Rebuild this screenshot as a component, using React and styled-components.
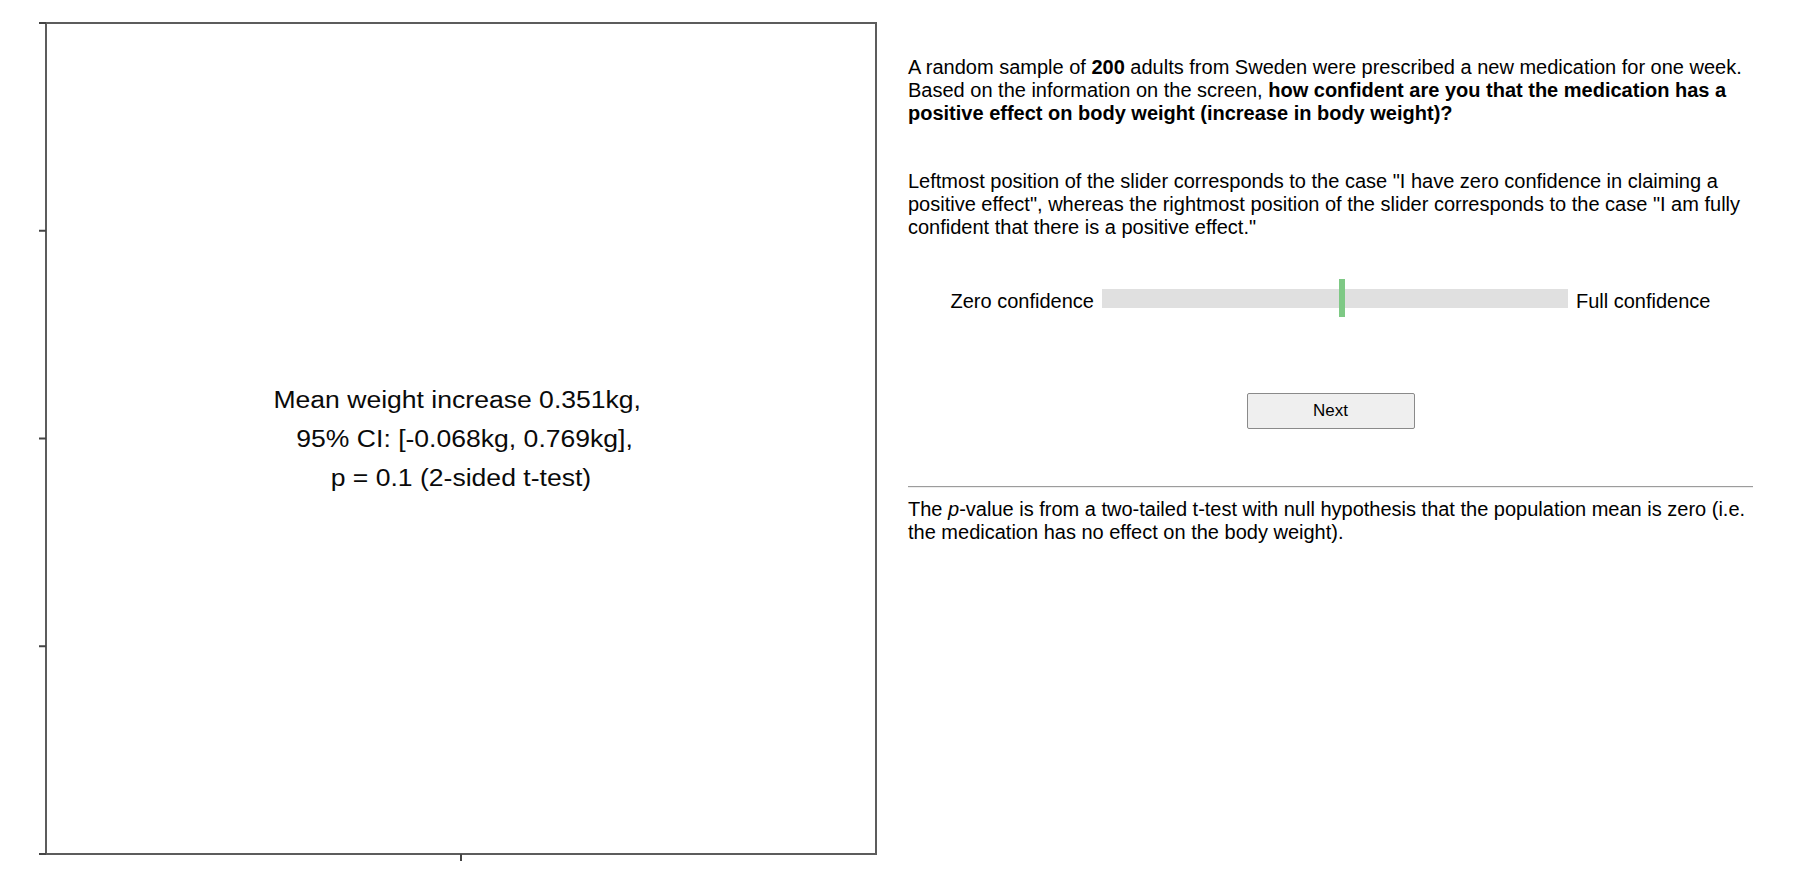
import React from 'react'
import styled, { createGlobalStyle } from 'styled-components';

const GlobalStyle = createGlobalStyle`
    html, body {
        margin : 0;
        padding : 0;
        background-color : #fff;
    }
    body {
        font-family : "Liberation Sans", Arial, sans-serif;
        color : #000;
    }
`;

const Page = styled.div`
    display : flex;
    align-items : flex-start;
    width : 1800px;
    height : 877px;
    overflow : hidden;
`;

const Figure = styled.div`
    position : relative;
    box-sizing : border-box;
    width : 880px;
    height : 877px;
    padding : 22px 3px 0 45px;
    flex-shrink : 0;
`;

const Ticks = styled.svg`
    position : absolute;
    top : 0;
    left : 0;
    pointer-events : none;
`;

const PlotArea = styled.div`
    box-sizing : border-box;
    width : 832px;
    height : 833px;
    border : 2px solid #5c5c5c;
    display : flex;
    align-items : center;
    justify-content : center;
`;

const PlotLabel = styled.div`
    font-size : 23.5px;
    line-height : 39px;
    text-align : center;
    color : #0a0a0a;
    transform : scaleX(1.13);
    margin-top : 2px;
`;

const Column = styled.div`
    box-sizing : border-box;
    width : 845px;
    margin-left : 28px;
    padding-top : 56px;
    font-size : 20px;
    line-height : 23px;
`;

const Para = styled.p`
    margin : 0 0 ${props => props.gap || 0}px 0;
`;

const SliderRow = styled.div`
    display : flex;
    align-items : center;
    justify-content : center;
    gap : 8px;
    height : 38px;
    margin-top : 40px;
`;

const SliderLabel = styled.span`
    white-space : nowrap;
    margin-top : 6px;
`;

const Track = styled.div`
    position : relative;
    width : 466px;
    height : 19px;
    background-color : #e0e0e0;
`;

const Thumb = styled.div`
    position : absolute;
    top : -10px;
    width : 6px;
    height : 38px;
    background-color : #7ec985;
    transform : translateX(-50%);
`;

const ButtonRow = styled.div`
    display : flex;
    justify-content : center;
    margin-top : 76px;
`;

const NextButton = styled.button`
    box-sizing : border-box;
    width : 168px;
    height : 36px;
    font-family : "Liberation Sans", Arial, sans-serif;
    font-size : 17px;
    color : #000;
    background-color : #efefef;
    border : 1px solid #8a8a8a;
    border-radius : 2px;
    cursor : pointer;
`;

const Rule = styled.hr`
    margin : 57px 0 10px 0;
    height : 0;
    border : none;
    border-top : 1px solid #9c9c9c;
    border-bottom : 1px solid #ededed;
`;

const yTicks = [23, 230.75, 438.5, 646.25, 854];

const MatchInfo = () => {
    const value = 51.5;
    return (
        <Page>
            <GlobalStyle />
            <Figure>
                <Ticks width='880' height='877'>
                    {yTicks.map(y => (
                        <line key={y} x1='39' x2='46' y1={y} y2={y} stroke='#444' strokeWidth='2' />
                    ))}
                    <line x1='461' x2='461' y1='854' y2='861' stroke='#444' strokeWidth='2' />
                </Ticks>
                <PlotArea>
                    <PlotLabel>
                        Mean weight increase 0.351kg,&nbsp;<br />
                        &nbsp;95% CI: [-0.068kg, 0.769kg],<br />
                        p = 0.1 (2-sided t-test)
                    </PlotLabel>
                </PlotArea>
            </Figure>
            <Column>
                <Para gap={45}>
                    A random sample of <b>200</b> adults from Sweden were prescribed a new medication for one week.
                    Based on the information on the screen, <b>how confident are you that the medication has a positive effect on body weight (increase in body weight)?</b>
                </Para>
                <Para>
                    Leftmost position of the slider corresponds to the case "I have zero confidence in claiming a positive effect", whereas the rightmost position of the slider corresponds to the case "I am fully confident that there is a positive effect."
                </Para>
                <SliderRow>
                    <SliderLabel>Zero confidence</SliderLabel>
                    <Track>
                        <Thumb style={{ left: `${value}%` }} />
                    </Track>
                    <SliderLabel>Full confidence</SliderLabel>
                </SliderRow>
                <ButtonRow>
                    <NextButton>Next</NextButton>
                </ButtonRow>
                <Rule />
                <Para>
                    The <i>p</i>-value is from a two-tailed t-test with null hypothesis that the population mean is zero (i.e. the medication has no effect on the body weight).
                </Para>
            </Column>
        </Page>
    )
}

export default MatchInfo
